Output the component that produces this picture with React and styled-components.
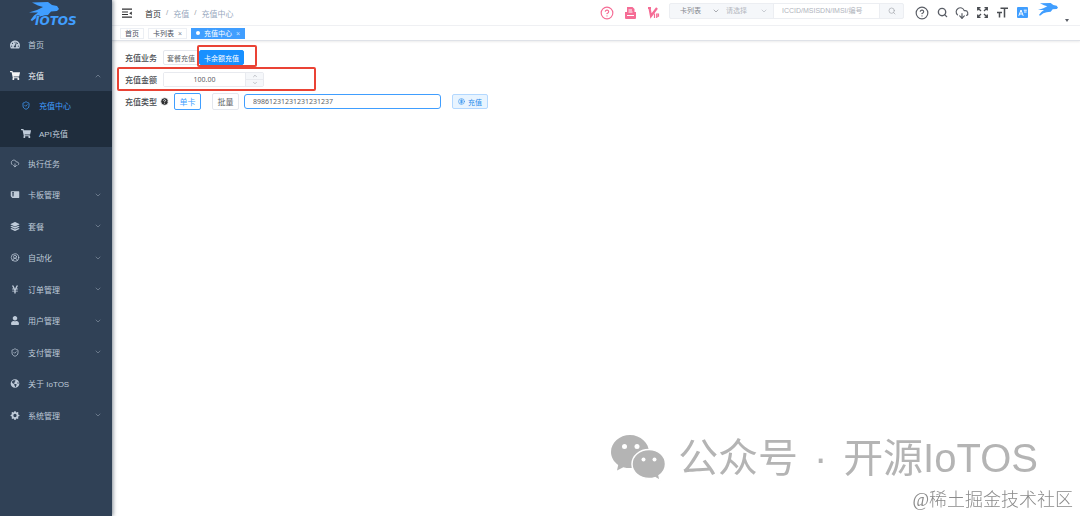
import React, { useState } from 'react'
import styled, { createGlobalStyle } from 'styled-components'
import { FaShoppingCart, FaUser, FaYenSign, FaGlobeAmericas, FaLayerGroup, FaTachometerAlt } from 'react-icons/fa'
import { BsGearFill, BsFillSdCardFill } from 'react-icons/bs'
import { ShieldCheck, CloudDownload, CircleUserRound, CircleHelp, CircleDollarSign, Search, ChevronDown, ChevronUp } from 'lucide-react'

const GlobalStyle = createGlobalStyle`
  * {
    box-sizing: border-box;
  }

  body {
    margin: 0;
    background: #fff;
    color: #606266;
    font-family: "Liberation Sans", "Noto Sans CJK SC", sans-serif;
    font-size: 8px;
  }

  button, input, select {
    font: inherit;
    color: inherit;
    margin: 0;
    padding: 0;
    border-radius: 0;
    outline: none;
  }

  button {
    cursor: pointer;
  }

  a {
    color: inherit;
    text-decoration: none;
  }
`

const Layout = styled.div`
  display: flex;
  min-height: 100vh;
`

const Sidebar = styled.aside`
  width: 112px;
  flex: none;
  background: #304156;
  color: #bfcbd9;
  box-shadow: 1px 0 4px rgba(0, 21, 41, 0.5);
  z-index: 1;
`

const Logo = styled.a`
  display: block;
  height: 28px;
  padding-left: 28px;

  svg {
    display: block;
  }
`

const Menu = styled.ul`
  list-style: none;
  margin: 0;
  padding: 0;
`

const MenuItem = styled.li`
  &:nth-child(odd) > a {
    height: 32px;
  }
`

const SubMenu = styled(Menu)`
  background: #1f2d3d;
`

const MenuLink = styled.a`
  display: flex;
  align-items: center;
  gap: 8px;
  height: 31px;
  padding: 0 10px;
  color: ${props => props.$open ? "#f4f4f5" : "inherit"};

  > svg {
    width: 10px;
    height: 9px;
    flex: none;
  }

  span {
    flex: 1;
  }

  > svg.arrow {
    width: 8px;
    height: 8px;
    color: #8593a3;
  }
`

const SubLink = styled.a`
  display: flex;
  align-items: center;
  gap: 8px;
  height: 28px;
  padding-left: 21px;
  color: ${props => props.$active ? "#409eff" : "inherit"};

  svg {
    width: 10px;
    height: 9px;
  }
`

const Main = styled.main`
  flex: 1;
  min-width: 0;
`

const Navbar = styled.header`
  display: flex;
  align-items: center;
  justify-content: space-between;
  height: 26px;
  padding: 0 10px;
  border-bottom: 1px solid #f0f1f4;
`

const NavGroup = styled.div`
  display: flex;
  align-items: center;
  gap: ${props => props.$gap}px;
`

const Breadcrumb = styled.nav`
  display: flex;
  gap: 5px;
  padding-top: 2px;
  color: #97a8be;

  a {
    color: #303133;
  }

  i {
    color: #a0a5ae;
    font-style: normal;
  }
`

const IconButton = styled.button`
  display: flex;
  align-items: center;
  justify-content: center;
  width: 14px;
  height: 24px;
  border: 0;
  background: none;
  color: ${props => props.$pink ? "#f56c95" : "#5a5e66"};
`

const FoldButton = styled(IconButton)`
  width: 10px;
`

const SearchBox = styled.form`
  display: flex;
  height: 16px;
  margin: 0 2px 4px 0;
  border: 1px solid #eceef2;
  border-radius: 2px;
  background: #f5f7fa;
  color: #a2a5ab;
  font-size: 7px;

  input {
    width: 107px;
    border: solid #eceef2;
    border-width: 0 1px;
    background: #fff;
    padding-left: 8px;
  }

  input::placeholder {
    color: #b0b4bd;
  }

  button {
    display: flex;
    align-items: center;
    justify-content: center;
    width: 23px;
    border: 0;
    background: none;
  }
`

const SelectWrap = styled.label`
  display: flex;
  align-items: center;
  width: ${props => props.$width}px;
  padding: 0 5px 0 ${props => props.$pad}px;
  color: ${props => props.$empty ? "#b4b8c0" : "#85888e"};

  select {
    flex: 1;
    min-width: 0;
    appearance: none;
    border: 0;
    background: none;
  }
`

const UserButton = styled.button`
  display: flex;
  align-items: flex-end;
  gap: 6px;
  margin-left: 3px;
  padding: 0;
  border: 0;
  background: none;
`

const TagsBar = styled.nav`
  display: flex;
  align-items: center;
  gap: 4px;
  height: 15px;
  padding-left: 8px;
  border-bottom: 1px solid #dfe2e8;
  box-shadow: 0 1px 2px rgba(0, 0, 0, 0.08);
  font-size: 7px;
`

const Tag = styled.a`
  display: flex;
  align-items: center;
  gap: 4px;
  height: 11px;
  padding: 0 4px;
  border: 1px solid ${props => props.$active ? "#409eff" : "#eceff4"};
  background: ${props => props.$active ? "#409eff" : "#fff"};
  color: ${props => props.$active ? "#fff" : "#495060"};

  span {
    opacity: 0.7;
  }
`

const Dot = styled.i`
  width: 4px;
  height: 4px;
  border-radius: 50%;
  background: #fff;
`

const Content = styled.form`
  display: flex;
  flex-direction: column;
  align-items: flex-start;
  gap: 5px;
  padding: 8px 13px;
`

const Row = styled.div`
  position: relative;
  display: flex;
  align-items: center;
  height: 17px;
`

const Label = styled.label`
  display: flex;
  align-items: center;
  gap: 3px;
  min-width: ${props => props.$wide ? 49 : 38}px;
  font-weight: 500;
  color: #484b50;
`

const RadioGroup = styled.div`
  display: flex;
  font-size: 7px;
`

const RadioButton = styled.button`
  height: 15px;
  padding: 0 ${props => props.$active ? 4 : 3}px;
  border: 1px solid ${props => props.$active ? "#1890ff" : "#e4e7ed"};
  border-radius: 2px;
  background: ${props => props.$active ? "#1890ff" : "#fff"};
  color: ${props => props.$active ? "#fff" : "#606266"};
`

// red frame drawn over the fields that need attention
const Highlight = styled.span`
  position: absolute;
  inset: ${props => props.$inset};
  border: 2px solid #ea4335;
  border-radius: 2px;
  pointer-events: none;
`

const NumberBox = styled.div`
  display: flex;
  width: 101px;
  height: 15px;
  border: 1px solid #e8eaef;
  border-radius: 2px;
  font-size: 7px;

  input {
    flex: 1;
    min-width: 0;
    border: 0;
    text-align: center;
    font-family: "Noto Sans", sans-serif;
  }
`

const Stepper = styled.div`
  display: flex;
  flex-direction: column;
  width: 18px;
  border-left: 1px solid #e8eaef;
  background: #f5f7fa;

  button {
    display: flex;
    flex: 1;
    align-items: center;
    justify-content: center;
    border: 0;
    background: none;
    color: #8b8e95;
  }

  button + button {
    border-top: 1px solid #e8eaef;
  }
`

const TypeButton = styled.button`
  width: 27px;
  height: 17px;
  margin-right: ${props => props.$active ? 11 : 5}px;
  border: 1px solid ${props => props.$active ? "#409eff" : "#e4e7ed"};
  border-radius: 2px;
  background: #fff;
  color: ${props => props.$active ? "#409eff" : "#606266"};
`

const CardInput = styled.input`
  width: 197px;
  height: 15px;
  padding-left: 8px;
  border: 1px solid #409eff;
  border-radius: 3px;
  background: #fff;
  font-family: "Noto Sans", sans-serif;
  font-size: 7px;
`

const SubmitButton = styled.button`
  display: flex;
  align-items: center;
  justify-content: center;
  gap: 3px;
  width: 36px;
  height: 15px;
  margin-left: 11px;
  border: 1px solid #b3d8ff;
  border-radius: 2px;
  background: #e8f4ff;
  color: #2a8cec;
  font-size: 7px;
`

const Watermark = styled.div`
  position: fixed;
  right: 42px;
  bottom: 35px;
  display: flex;
  align-items: center;
  color: #b4b4b4;
  font-size: 40px;
  line-height: 44px;

  svg {
    margin-right: 12px;
  }

  i {
    width: 45px;
    font-style: normal;
    text-align: center;
  }
`

const Signature = styled.div`
  position: fixed;
  right: 7px;
  bottom: 4px;
  color: #8a8a8a;
  font-family: "Liberation Serif", "Noto Sans CJK SC", serif;
  font-size: 18px;
  font-weight: 300;
  line-height: 24px;
`

const Dog = () => (
  <g fill="#409eff">
    <path d="M3 0.500L19 0L23 3L28 4L30 7L28 9L22 9.500L19 13L13 14L8 15.500L3 19L1.500 18L5 13.500L9 10.500L0 10.500L8 8L14 5L9 3.500Z" />
  </g>
)

const LogoIcon = () => (
  <svg width="54" height="28" viewBox="0 0 54 28" aria-label="IOTOS">
    <g transform="translate(1 2)"><Dog /></g>
    <text x="7" y="25" fill="#409eff" stroke="#304156" strokeWidth="1" paintOrder="stroke"
      fontFamily="DejaVu Sans" fontWeight="bold" fontStyle="italic" fontSize="12">IOTOS</text>
  </svg>
)

const FoldIcon = () => (
  <svg width="10" height="10" viewBox="0 0 10 10" stroke="#303133" strokeWidth="1.2">
    <path d="M0 1.2H10M0 4H6M0 6.5H6M0 9.2H10" />
    <path d="M9.8 3.4V7L7.2 5.2Z" fill="#303133" stroke="none" />
  </svg>
)

const PrintIcon = () => (
  <svg width="11" height="12" viewBox="0 0 11 12" fill="#f56c95">
    <path d="M2 0H7.500L9.500 2V5H11V11Q11 12 10 12H1Q0 12 0 11V5H2Z" />
    <path d="M3.500 3H7M3.500 5H7.500M2 8.500H9" stroke="#fff" />
  </svg>
)

const VipIcon = () => (
  <svg width="13" height="13" viewBox="0 0 13 13" fill="none" stroke="#f56c95">
    <path d="M1 2H4M2.5 2L4 10L10 2" strokeWidth="2.2" />
    <path d="M7.5 7.5V12M9.7 12V8H11.5V10.2H9.7" strokeWidth="1.2" />
  </svg>
)

const FullscreenIcon = () => (
  <svg width="11" height="11" viewBox="0 0 11 11" fill="none" stroke="#4a4d52" strokeWidth="1.3">
    <path d="M.7 3.5V.7H3.5M.7 .7L4 4M7.5 .7H10.3V3.5M10.3 .7L7 4M.7 7.5V10.3H3.5M.7 10.3L4 7M10.3 7.5V10.3H7.5M10.3 10.3L7 7" />
  </svg>
)

const SizeIcon = () => (
  <svg width="11" height="11" viewBox="0 0 11 11" fill="none" stroke="#4a4d52" strokeWidth="1.5">
    <path d="M3.5 1.2H11M7.5 1V10.5M0 5.5H5M2.5 5V10.5" />
  </svg>
)

const LangIcon = () => (
  <svg width="11" height="11" viewBox="0 0 11 11">
    <rect width="11" height="11" rx="1" fill="#409eff" />
    <path d="M1.8 8.8L4 3L6.2 8.8M2.6 7H5.4M6.8 3.2H9.8M7 5H9.6" fill="none" stroke="#fff" />
  </svg>
)

const WechatIcon = () => (
  <svg width="55" height="46" viewBox="0 0 55 46" fill="#b4b4b4">
    <path d="M19 0C8.500 0 0 7.600 0 17c0 5.300 2.800 9.800 7.200 13L6 35.500l6.300-3.300c2.200.6 4.400.9 6.700.9 10.500 0 19-7.200 19-16.100S29.500 0 19 0Z" />
    <path d="M38 14.500c-9.400 0-17 6.400-17 14.500s7.600 14.500 17 14.500c2.100 0 4.100-.3 6-.9l5.200 3-1.200-5c4-2.700 6.500-6.900 6.500-11.600 0-8.100-7.100-14.500-16.500-14.500Z" stroke="#fff" strokeWidth="1.5" />
    <g fill="#fff">
      <circle cx="13.500" cy="11.500" r="2.500" />
      <circle cx="26" cy="11.500" r="2.500" />
      <circle cx="32.500" cy="24.500" r="2" />
      <circle cx="43.500" cy="24.500" r="2" />
    </g>
  </svg>
)

const CardIcon = styled(BsFillSdCardFill)`
  transform: rotate(-90deg);
`

const menu = [
  { title: "执行任务", icon: <CloudDownload /> },
  { title: "卡板管理", icon: <CardIcon />, children: true },
  { title: "套餐", icon: <FaLayerGroup />, children: true },
  { title: "自动化", icon: <CircleUserRound />, children: true },
  { title: "订单管理", icon: <FaYenSign />, children: true },
  { title: "用户管理", icon: <FaUser />, children: true },
  { title: "支付管理", icon: <ShieldCheck />, children: true },
  { title: "关于 IoTOS", icon: <FaGlobeAmericas /> },
  { title: "系统管理", icon: <BsGearFill />, children: true },
]

const Side = () => (
  <Sidebar>
    <Logo href="#"><LogoIcon /></Logo>
    <Menu>
      <MenuItem>
        <MenuLink href="#"><FaTachometerAlt /><span>首页</span></MenuLink>
      </MenuItem>
      <MenuItem>
        <MenuLink href="#" $open><FaShoppingCart /><span>充值</span><ChevronUp className="arrow" /></MenuLink>
        <SubMenu>
          <li><SubLink href="#" $active><ShieldCheck />充值中心</SubLink></li>
          <li><SubLink href="#"><FaShoppingCart />API充值</SubLink></li>
        </SubMenu>
      </MenuItem>
    </Menu>
    <Menu>
      {menu.map(item => (
        <MenuItem key={item.title}>
          <MenuLink href="#">
            {item.icon}
            <span>{item.title}</span>
            {item.children && <ChevronDown className="arrow" />}
          </MenuLink>
        </MenuItem>
      ))}
    </Menu>
  </Sidebar>
)

const Header = () => (
  <Navbar>
    <NavGroup $gap={13}>
      <FoldButton type="button" aria-label="收起菜单"><FoldIcon /></FoldButton>
      <Breadcrumb>
        <a href="#">首页</a><i>/</i><span>充值</span><i>/</i><span>充值中心</span>
      </Breadcrumb>
    </NavGroup>
    <NavGroup $gap={9}>
      <IconButton $pink type="button" aria-label="帮助"><CircleHelp size={14} /></IconButton>
      <IconButton $pink type="button" aria-label="打印"><PrintIcon /></IconButton>
      <IconButton $pink type="button" aria-label="VIP"><VipIcon /></IconButton>
      <SearchBox onSubmit={evt => evt.preventDefault()}>
        <SelectWrap $width={55} $pad={10}>
          <select aria-label="列表"><option>卡列表</option></select>
          <ChevronDown size={8} />
        </SelectWrap>
        <SelectWrap $width={48} $pad={1} $empty>
          <select aria-label="类型"><option>请选择</option></select>
          <ChevronDown size={8} />
        </SelectWrap>
        <input type="text" aria-label="关键字" placeholder="ICCID/MSISDN/IMSI/编号" />
        <button type="submit" aria-label="查询"><Search size={8} /></button>
      </SearchBox>
      <NavGroup $gap={6}>
        <IconButton type="button" aria-label="说明"><CircleHelp size={14} /></IconButton>
        <IconButton type="button" aria-label="搜索"><Search size={11} strokeWidth={3} /></IconButton>
        <IconButton type="button" aria-label="下载"><CloudDownload size={14} /></IconButton>
        <IconButton type="button" aria-label="全屏"><FullscreenIcon /></IconButton>
        <IconButton type="button" aria-label="字号"><SizeIcon /></IconButton>
        <IconButton type="button" aria-label="语言"><LangIcon /></IconButton>
        <UserButton type="button" aria-label="用户">
          <svg width="20" height="20" viewBox="0 0 30 30"><Dog /></svg>
          <svg width="6" height="4" viewBox="0 0 6 4"><path d="M1 0H5L3 3Z" fill="#5a5e66" /></svg>
        </UserButton>
      </NavGroup>
    </NavGroup>
  </Navbar>
)

const Recharge = () => {

    const [amount, setAmount] = useState(100);
    const [card, setCard] = useState("89861231231231231237");

    return (
      <Content onSubmit={evt => evt.preventDefault()}>
        <Row>
          <Label as="span">充值业务</Label>
          <RadioGroup>
            <RadioButton type="button">套餐充值</RadioButton>
            <RadioButton type="button" $active>卡余额充值</RadioButton>
          </RadioGroup>
          <Highlight $inset="-4px -13px -1px 72px" />
        </Row>
        <Row>
          <Label htmlFor="amount">充值金额</Label>
          <NumberBox>
            <input id="amount" type="text" value={amount.toFixed(2)}
              onChange={evt => setAmount(Number(evt.target.value) || 0)} />
            <Stepper>
              <button type="button" aria-label="增加" onClick={() => setAmount(amount + 1)}><ChevronUp size={6} /></button>
              <button type="button" aria-label="减少" onClick={() => setAmount(amount - 1)}><ChevronDown size={6} /></button>
            </Stepper>
          </NumberBox>
          <Highlight $inset="-4px -52px -3px -8px" />
        </Row>
        <Row>
          <Label htmlFor="card" $wide>
            充值类型
            <CircleHelp size={9} fill="#303133" stroke="#fff" />
          </Label>
          <TypeButton type="button" $active>单卡</TypeButton>
          <TypeButton type="button">批量</TypeButton>
          <CardInput id="card" type="text" value={card} onChange={evt => setCard(evt.target.value)} />
          <SubmitButton type="submit"><CircleDollarSign size={7} />充值</SubmitButton>
        </Row>
      </Content>
    )
}

const App = () => (
  <Layout>
    <GlobalStyle />
    <Side />
    <Main>
      <Header />
      <TagsBar>
        <Tag href="#">首页</Tag>
        <Tag href="#">卡列表 <span>×</span></Tag>
        <Tag href="#" $active><Dot />充值中心 <span>×</span></Tag>
      </TagsBar>
      <Recharge />
    </Main>
    <Watermark><WechatIcon />公众号<i>·</i>开源IoTOS</Watermark>
    <Signature>@稀土掘金技术社区</Signature>
  </Layout>
)

export default App
